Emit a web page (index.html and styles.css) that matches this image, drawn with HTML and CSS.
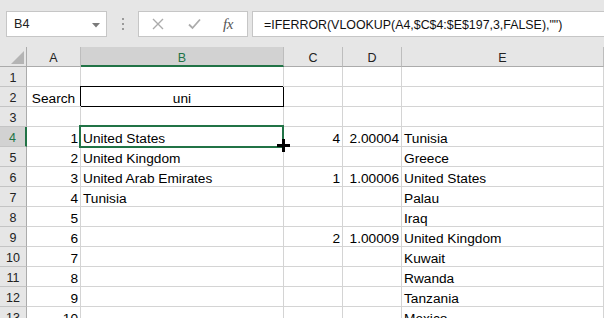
FILE: index.html
```html
<!DOCTYPE html>
<html>
<head>
<meta charset="utf-8">
<link rel="stylesheet" href="styles.css">
</head>
<body>
<div class="app">
  <div class="toolbar">
    <div class="namebox">
      <span class="nb-text">B4</span>
      <svg class="drop" width="8" height="5" viewBox="0 0 8 5"><polygon points="0,0 8,0 4,4.5" fill="#7a7a7a"/></svg>
    </div>
    <div class="grip"><i></i><i></i><i></i></div>
    <div class="fbtns">
      <svg class="ico" width="12" height="12" viewBox="0 0 12 12"><path d="M1 1 L11 11 M11 1 L1 11" stroke="#ababab" stroke-width="1.4" fill="none"/></svg>
      <svg class="ico" width="13" height="12" viewBox="0 0 13 12"><path d="M1 6.5 L4.5 10 L12 1.5" stroke="#ababab" stroke-width="1.8" fill="none"/></svg>
      <span class="fx">fx</span>
    </div>
    <div class="formula">=IFERROR(VLOOKUP(A4,$C$4:$E$197,3,FALSE),"")</div>
  </div>
  <div class="sheet">
    <div class="h corner"><svg width="13" height="13" viewBox="0 0 13 13"><polygon points="13,0 13,13 0,13" fill="#b4b4b4"/></svg></div>
    <div class="h ch">A</div>
    <div class="h ch sel-col">B</div>
    <div class="h ch">C</div>
    <div class="h ch">D</div>
    <div class="h ch">E</div>

    <div class="h rh">1</div><div class="c"></div><div class="c"></div><div class="c"></div><div class="c"></div><div class="c"></div>

    <div class="h rh">2</div><div class="c ctr">Search</div><div class="c ctr search">uni</div><div class="c"></div><div class="c"></div><div class="c"></div>

    <div class="h rh">3</div><div class="c"></div><div class="c"></div><div class="c"></div><div class="c"></div><div class="c"></div>

    <div class="h rh sel-row">4</div><div class="c num">1</div><div class="c active">United States<span class="sel"></span><svg class="cursor" width="15" height="15" viewBox="0 0 15 15"><path d="M7.5 0 V13 M1 6.5 H14" stroke="#000" stroke-width="3" fill="none"/></svg></div><div class="c num">4</div><div class="c num">2.00004</div><div class="c">Tunisia</div>

    <div class="h rh">5</div><div class="c num">2</div><div class="c">United Kingdom</div><div class="c"></div><div class="c"></div><div class="c">Greece</div>

    <div class="h rh">6</div><div class="c num">3</div><div class="c">United Arab Emirates</div><div class="c num">1</div><div class="c num">1.00006</div><div class="c">United States</div>

    <div class="h rh">7</div><div class="c num">4</div><div class="c">Tunisia</div><div class="c"></div><div class="c"></div><div class="c">Palau</div>

    <div class="h rh">8</div><div class="c num">5</div><div class="c"></div><div class="c"></div><div class="c"></div><div class="c">Iraq</div>

    <div class="h rh">9</div><div class="c num">6</div><div class="c"></div><div class="c num">2</div><div class="c num">1.00009</div><div class="c">United Kingdom</div>

    <div class="h rh">10</div><div class="c num">7</div><div class="c"></div><div class="c"></div><div class="c"></div><div class="c">Kuwait</div>

    <div class="h rh">11</div><div class="c num">8</div><div class="c"></div><div class="c"></div><div class="c"></div><div class="c">Rwanda</div>

    <div class="h rh">12</div><div class="c num">9</div><div class="c"></div><div class="c"></div><div class="c"></div><div class="c">Tanzania</div>

    <div class="h rh">13</div><div class="c num">10</div><div class="c"></div><div class="c"></div><div class="c"></div><div class="c">Mexico</div>
  </div>
</div>
</body>
</html>
```

FILE: styles.css
```css
html, body {
  margin: 0;
  padding: 0;
  width: 604px;
  height: 318px;
  overflow: hidden;
  background: #ffffff;
  font-family: "Liberation Sans", Arial, sans-serif;
}

.app {
  width: 604px;
}

.toolbar {
  height: 47px;
  box-sizing: border-box;
  background: #e6e6e6;
  padding: 11px 0 0 6px;
  display: flex;
  align-items: flex-start;
}

.namebox {
  width: 101px;
  height: 26px;
  box-sizing: border-box;
  border: 1px solid #c6c6c6;
  background: #ffffff;
  display: flex;
  align-items: flex-start;
  justify-content: space-between;
  padding: 1px 6px 0 7px;
}

.nb-text {
  font-size: 12.6px;
  line-height: 23px;
  color: #222;
}

.drop {
  margin-top: 10px;
}

.grip {
  width: 31px;
  height: 26px;
  display: flex;
  flex-direction: column;
  align-items: center;
  justify-content: center;
  gap: 3px;
}

.grip i {
  display: block;
  width: 2px;
  height: 2px;
  background: #9a9a9a;
}

.fbtns {
  width: 110px;
  height: 26px;
  box-sizing: border-box;
  border: 1px solid #c6c6c6;
  background: #ffffff;
  display: flex;
  align-items: center;
  padding: 0 0 0 13px;
  gap: 0;
}

.fbtns .ico:first-child {
  margin-right: 24px;
}

.fbtns .ico:nth-child(2) {
  margin-right: 22px;
}

.fx {
  font-family: "Liberation Serif", "Times New Roman", serif;
  font-style: italic;
  font-size: 15px;
  color: #555;
  letter-spacing: -0.5px;
  line-height: 20px;
}

.formula {
  flex: 1;
  margin-left: 4px;
  height: 26px;
  box-sizing: border-box;
  border: 1px solid #c6c6c6;
  border-right: none;
  background: #ffffff;
  padding: 2px 0 0 11px;
  font-size: 12.4px;
  line-height: 23px;
  color: #111;
  white-space: nowrap;
  overflow: hidden;
}

.sheet {
  display: grid;
  grid-template-columns: 27px 54px 203px 59px 59px 1fr;
  grid-auto-rows: 20px;
}

.h {
  background: #e6e6e6;
  box-sizing: border-box;
  font-size: 12.5px;
  color: #222;
  text-align: center;
  padding-top: 2px;
  line-height: 19px;
}

.corner {
  border-right: 1px solid #ababab;
  border-bottom: 1px solid #ababab;
  padding: 4px 0 0 11px;
  text-align: left;
  line-height: 0;
}

.ch {
  border-right: 1px solid #bdbdbd;
  border-bottom: 1px solid #ababab;
}

.rh {
  border-right: 1px solid #ababab;
  border-bottom: 1px solid #c4c4c4;
}

.sel-col {
  background: #d2d2d2;
  color: #217346;
  border-bottom: 2px solid #217346;
}

.sel-row {
  background: #d2d2d2;
  color: #217346;
  border-right: 2px solid #217346;
}

.c {
  box-sizing: border-box;
  border-right: 1px solid #d4d4d4;
  border-bottom: 1px solid #d4d4d4;
  padding: 2px 2px 0 2px;
  font-size: 13.7px;
  line-height: 19px;
  color: #000;
  white-space: nowrap;
  overflow: hidden;
}

.num {
  text-align: right;
}

.ctr {
  text-align: center;
}

.search {
  border-right: 1px solid #000;
  border-bottom: 1px solid #000;
  box-shadow: -1px -1px 0 0 #000;
  position: relative;
}

.active {
  position: relative;
  overflow: visible;
}

.sel {
  position: absolute;
  left: -2px;
  top: -2px;
  right: -1px;
  bottom: -2px;
  border: 2px solid #217346;
  z-index: 2;
  pointer-events: none;
}

.cursor {
  position: absolute;
  right: -8px;
  bottom: -8px;
  z-index: 3;
}
```
